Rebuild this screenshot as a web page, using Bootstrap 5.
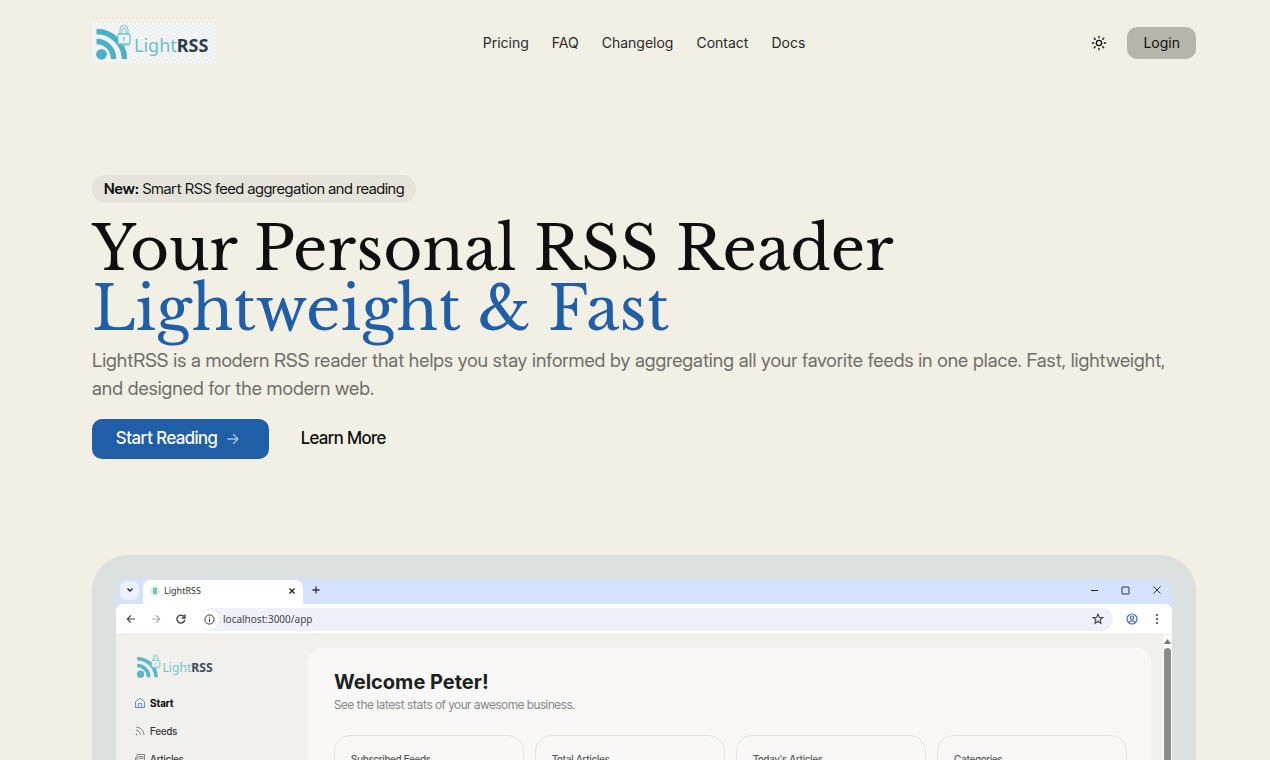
<!DOCTYPE html>
<html lang="en">
<head>
<meta charset="utf-8">
<meta name="viewport" content="width=device-width, initial-scale=1">
<title>LightRSS - Your Personal RSS Reader</title>
<link href="https://cdn.jsdelivr.net/npm/bootstrap@5.3.0/dist/css/bootstrap.min.css" rel="stylesheet">
<style>
  body { font-family: Inter, "Liberation Sans", sans-serif; font-size: 14px; line-height: 20px; color: #0f0f0f; background: #f2efe4; }
  a { color: inherit; text-decoration: none; }
  svg { display: block; flex: none; }
  .page-wrap { padding-left: 92px; padding-right: 74px; }
  .site-head { height: 86px; }
  .head-side { flex: 1 1 0; gap: 20px; }
  .logo-tile { background: repeating-conic-gradient(#ebeeef 0 25%, #f8f9f9 0 50%) 0 0 / 4px 4px; }
  .main-links { gap: 23px; font-weight: 400; color: #2a2a29; }
  .btn-login, .btn-login:hover { height: 32px; padding: 0 16px; border: 0; border-radius: 10px; background: #b7b4aa; font-size: 14px; line-height: 20px; font-weight: 400; color: #0f0f0f; }
  .btn-icon { padding: 0; border: 0; background: none; color: inherit; }
  .hero { padding-top: 89px; padding-bottom: 96px; }
  .news-pill { height: 28px; padding: 0 12px; border-radius: 14px; background: #e6e3da; font-family: "Inter Tight", Inter, sans-serif; font-size: 15px; font-weight: 400; }
  .hero-title { margin: 16px 0 0; font-family: "Libre Baskerville", "Liberation Serif", serif; font-size: 60px; line-height: 60px; font-weight: 400; }
  .hero-title span { color: #205ea8; }
  .hero-copy { margin: 8px 0 0; font-family: "Inter Display", Inter, sans-serif; font-size: 19px; line-height: 28px; color: #706e6a; }
  .hero-btn { height: 40px; padding: 0 24px; border: 0; border-radius: 10px; font-family: "Inter Tight", Inter, sans-serif; font-size: 17px; font-weight: 500; color: #0f0f0f; white-space: nowrap; }
  .hero-main, .hero-main:hover { width: 177px; background: #205ea8; color: #fff; }
  .shot-frame { padding: 24px 24px 0; border-radius: 36px 36px 0 0; background: #dce0de; }
  .browser { border-radius: 9px 9px 0 0; background: #d5e2fc; overflow: hidden; font-family: "Inter Display", Inter, sans-serif; font-size: 10px; line-height: 14px; color: #333; }
  .tab-strip { height: 25px; padding: 0 10px 3px 4px; }
  .tab-menu { width: 19px; height: 19px; border-radius: 7px; background: #ebf1fe; }
  .open-tab { width: 160px; height: 24px; margin: 1px 0 0 4px; padding: 0 7px 3px; align-self: flex-start; border-radius: 8px 8px 0 0; background: #fff; font-family: "Noto Sans", sans-serif; font-size: 9px; }
  .win-buttons { gap: 22px; }
  .tool-row { height: 31px; padding: 0 9px; gap: 13px; border-bottom: 1px solid #e8e8e6; border-radius: 7px 7px 0 0; background: #fff; }
  .address { height: 23px; border-radius: 12px; background: #eef1fa; padding: 0 9px 0 0; }
  .address input { min-width: 0; border: 0; background: none; padding: 0; color: #454545; font: 10px/16px "Noto Sans", sans-serif; }
  .info-dot { width: 19px; height: 19px; border-radius: 50%; background: #fff; }
  .app { background: #f1f0ed; height: 240px; }
  .side { width: 192px; padding: 18px 18px 0; font-weight: 500; }
  .side-links { margin-top: 16px; gap: 14px; }
  .panel { margin-top: 13px; padding: 24px 24px 0 26px; border-radius: 14px 14px 0 0; background: #f9f8f6; }
  .panel h2 { margin: 0; font-family: Inter, sans-serif; font-size: 20px; line-height: 20px; font-weight: 700; color: #1b1f1e; }
  .panel p { margin: 6px 0 0; font-family: "Inter Tight", Inter, sans-serif; font-size: 12px; color: #858584; }
  .stats { margin-top: 23px; gap: 11px; }
  .stat { flex: 1 1 0; height: 110px; padding: 16px; border: 1px solid #e4e3e1; border-radius: 16px; font-weight: 500; color: #555; }
  .scroller { width: 9px; margin-left: 12px; background: #fbfbfa; padding-top: 4px; }
  .thumb { width: 7px; border-radius: 4px 4px 0 0; background: #8b8b8b; }
  .brand-text { font-family: "Noto Sans", sans-serif; }
</style>
</head>
<body>
<div class="page-wrap vh-100 overflow-hidden">
  <header class="site-head d-flex align-items-center">
    <div class="head-side d-flex">
      <a href="#" class="logo-tile" aria-label="LightRSS">
        <svg width="124" height="40" viewBox="0 0 124 40">
          <g id="rss-mark">
            <circle cx="9.500" cy="31.300" r="5.400" fill="#4bb0c4"/>
            <path d="M4.500 18.500A17 17 0 0 1 21.500 36M4.500 8.500A28 28 0 0 1 32.500 36" fill="none" stroke="#4bb0c4" stroke-width="5.400"/>
            <rect x="26" y="11" width="12" height="10" rx="1" fill="#eef3f3" stroke="#74c5c0" stroke-width="1.300"/>
            <path d="M28 11V6.500a4 4 0 0 1 8 0V11h-2V7a2 2 0 0 0-4 0v4M32 14v4M31 14.500h2M30 22h7" fill="none" stroke="#74c5c0"/>
          </g>
          <text class="brand-text" x="42" y="29" font-size="18" font-weight="400" fill="#6cc0c9">Light<tspan font-weight="700" fill="#2d3a4b">RSS</tspan></text>
        </svg>
      </a>
    </div>
    <nav class="main-links d-flex">
      <a href="#">Pricing</a><a href="#">FAQ</a><a href="#">Changelog</a><a href="#">Contact</a><a href="#">Docs</a>
    </nav>
    <div class="head-side d-flex align-items-center justify-content-end">
      <button class="btn-icon" aria-label="Change theme">
        <svg width="16" height="16" viewBox="0 0 24 24" fill="none" stroke="currentColor" stroke-width="2" stroke-linecap="round"><circle cx="12" cy="12" r="4"/><path d="M12 2v2M12 20v2M4.900 4.900l1.400 1.400M17.700 17.700l1.400 1.400M2 12h2M20 12h2M6.300 17.700l-1.400 1.400M19.100 4.900l-1.400 1.400"/></svg>
      </button>
      <button class="btn btn-login">Login</button>
    </div>
  </header>

  <section class="hero d-flex flex-column align-items-start">
    <div class="news-pill d-flex align-items-center"><span><strong class="fw-semibold">New:</strong> Smart RSS feed aggregation and reading</span></div>
    <h1 class="hero-title">Your Personal RSS Reader<br><span>Lightweight &amp; Fast</span></h1>
    <p class="hero-copy">LightRSS is a modern RSS reader that helps you stay informed by aggregating all your favorite feeds in one place. Fast, lightweight, and designed for the modern web.</p>
    <div class="d-flex gap-2 mt-3">
      <button class="btn hero-btn hero-main d-flex align-items-center gap-2">Start Reading
        <svg width="16" height="16" viewBox="0 0 16 16" fill="none" stroke="#a9c2de" stroke-width="1.300" stroke-linecap="round" stroke-linejoin="round"><path d="M3 8h10M8.500 3.500L13 8l-4.500 4.500"/></svg>
      </button>
      <a href="#" class="btn hero-btn d-flex align-items-center">Learn More</a>
    </div>
  </section>

  <section class="shot-frame">
    <div class="browser">
      <div class="tab-strip d-flex align-items-center">
        <button class="btn-icon tab-menu d-flex align-items-center justify-content-center" aria-label="Search tabs"><svg width="8" height="8" viewBox="0 0 8 8" fill="none" stroke="#222" stroke-width="1.400"><path d="M1.500 2.500L4 5l2.500-2.500"/></svg></button>
        <div class="open-tab d-flex align-items-center">
          <svg width="10" height="10" viewBox="0 0 10 10"><circle cx="5" cy="5" r="5" fill="#e2eeea"/><path d="M3 2l4 2-4 2 4 2M7 2L3 4l4 2-4 2" stroke="#62b9a5" fill="none"/></svg>
          <span class="ms-1">LightRSS</span>
          <button class="btn-icon ms-auto" aria-label="Close tab"><svg width="8" height="8" viewBox="0 0 8 8" stroke="#222" stroke-width="1.300"><path d="M1.500 1.500l5 5M6.500 1.500l-5 5"/></svg></button>
        </div>
        <button class="btn-icon ms-2" aria-label="New tab"><svg width="10" height="10" viewBox="0 0 10 10" stroke="#333" stroke-width="1.300"><path d="M5 1.500v7M1.500 5h7"/></svg></button>
        <div class="win-buttons ms-auto d-flex align-items-center">
          <button class="btn-icon" aria-label="Minimize"><svg width="9" height="9" viewBox="0 0 9 9" stroke="#222"><path d="M1 4.500h7"/></svg></button>
          <button class="btn-icon" aria-label="Maximize"><svg width="9" height="9" viewBox="0 0 9 9" stroke="#333" fill="none"><rect x="1" y="1" width="7" height="7" rx=".5"/></svg></button>
          <button class="btn-icon" aria-label="Close window"><svg width="10" height="10" viewBox="0 0 10 10" stroke="#333"><path d="M1.500 1.500l7 7M8.500 1.500l-7 7"/></svg></button>
        </div>
      </div>
      <div class="tool-row d-flex align-items-center">
        <button class="btn-icon" aria-label="Back"><svg width="12" height="12" viewBox="0 0 12 12" fill="none" stroke="#444" stroke-width="1.200"><path d="M10 6H2.500M6 2.300L2.300 6 6 9.700"/></svg></button>
        <button class="btn-icon" aria-label="Forward"><svg width="12" height="12" viewBox="0 0 12 12" fill="none" stroke="#aaa" stroke-width="1.200"><path d="M2 6h7.500M6 2.300L9.700 6 6 9.700"/></svg></button>
        <button class="btn-icon" aria-label="Reload"><svg width="12" height="12" viewBox="0 0 12 12" fill="none" stroke="#333" stroke-width="1.300"><path d="M9.800 7A4 4 0 1 1 9 3.500M10 1.500V5H6.700"/></svg></button>
        <div class="address d-flex align-items-center flex-grow-1">
          <span class="info-dot d-flex align-items-center justify-content-center"><svg width="11" height="11" viewBox="0 0 11 11" fill="none" stroke="#333"><circle cx="5.500" cy="5.500" r="4.600"/><path d="M5.500 5v3M5.500 2.800v1"/></svg></span>
          <input class="flex-grow-1 ms-1" type="text" value="localhost:3000/app" aria-label="Address">
          <button class="btn-icon" aria-label="Bookmark"><svg width="12" height="12" viewBox="0 0 12 12" fill="none" stroke="#444" stroke-width="1.200"><path d="M6 1.200l1.300 3.100 3.400.3-2.600 2.200.8 3.400L6 8.400l-2.900 1.800.8-3.400-2.600-2.200 3.400-.3z"/></svg></button>
        </div>
        <button class="btn-icon" aria-label="Profile"><svg width="12" height="12" viewBox="0 0 12 12" fill="none" stroke="#4767d5" stroke-width="1.200"><circle cx="6" cy="6" r="5"/><circle cx="6" cy="4.700" r="1.700"/><path d="M2.500 9.500c2-2.200 5-2.200 7 0"/></svg></button>
        <button class="btn-icon" aria-label="Menu"><svg width="12" height="12" viewBox="0 0 12 12" fill="#333"><circle cx="6" cy="2" r="1"/><circle cx="6" cy="6" r="1"/><circle cx="6" cy="10" r="1"/></svg></button>
      </div>
      <div class="app d-flex">
        <aside class="side">
          <svg width="84" height="27" viewBox="0 0 124 40" opacity=".9"><use href="#rss-mark"/><text class="brand-text" x="42" y="28" font-size="18" font-weight="400" fill="#6cc0c9">Light<tspan font-weight="700" fill="#2d3a4b">RSS</tspan></text></svg>
          <nav class="side-links d-flex flex-column">
            <a href="#" class="d-flex align-items-center fw-bold text-black"><svg class="me-1" width="12" height="12" viewBox="0 0 12 12" fill="none" stroke="#6585df"><path d="M1.500 4.800L6 1.200l4.500 3.600v5.700h-9zM4.300 10.500V6.500h3.400v4"/></svg>Start</a>
            <a href="#" class="d-flex align-items-center"><svg class="me-1" width="12" height="12" viewBox="0 0 12 12" fill="none" stroke="#888"><path d="M2 5.500A4.500 4.500 0 0 1 6.500 10M2 2a8 8 0 0 1 8 8"/><circle cx="2.500" cy="9.500" r=".5"/></svg>Feeds</a>
            <a href="#" class="d-flex align-items-center"><svg class="me-1" width="12" height="12" viewBox="0 0 12 12" fill="none" stroke="#888"><path d="M3 1.500h7.500v9h-9v-6H3zM3 4.500v6M5 3.500h4v2H5zM5 7.500h4M5 9h4"/></svg>Articles</a>
          </nav>
        </aside>
        <main class="panel flex-grow-1">
          <h2>Welcome Peter!</h2>
          <p>See the latest stats of your awesome business.</p>
          <div class="stats d-flex">
            <div class="stat">Subscribed Feeds</div>
            <div class="stat">Total Articles</div>
            <div class="stat">Today's Articles</div>
            <div class="stat">Categories</div>
          </div>
        </main>
        <div class="scroller d-flex flex-column align-items-center">
          <svg width="7" height="5" viewBox="0 0 7 5"><path d="M3.500 0L7 5H0z" fill="#777"/></svg>
          <div class="thumb flex-grow-1 mt-1"></div>
        </div>
      </div>
    </div>
  </section>
</div>
<script src="https://cdn.jsdelivr.net/npm/bootstrap@5.3.0/dist/js/bootstrap.bundle.min.js"></script>
</body>
</html>
